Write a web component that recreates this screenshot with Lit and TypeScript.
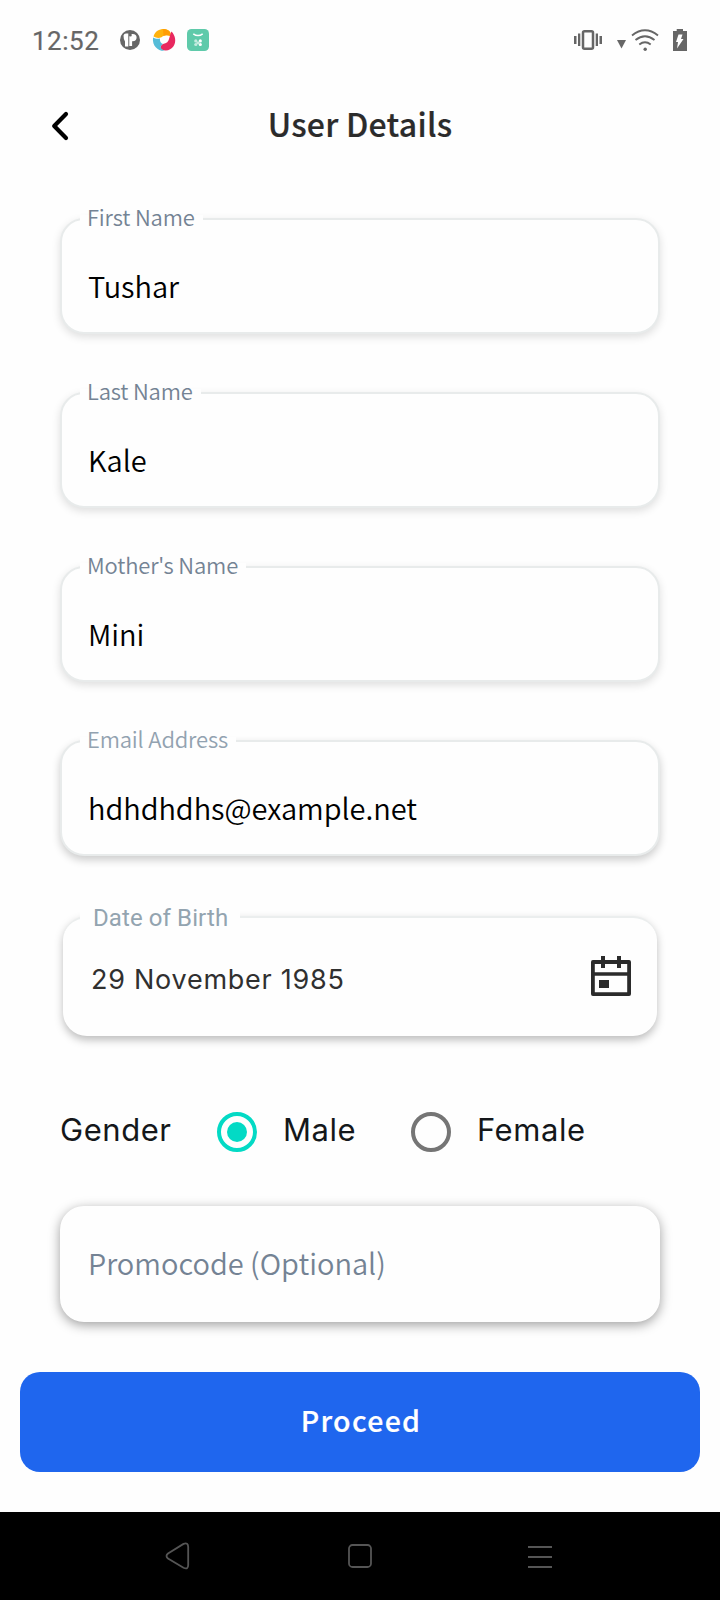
import { LitElement, html, css } from "lit";
import { customElement, property, state } from "lit/decorators.js";
import { classMap } from "lit/directives/class-map.js";

@customElement("status-bar")
class StatusBar extends LitElement {
  static styles = css`
    :host { display: flex; height: 80px; padding: 0 32px 0 32px; box-sizing: border-box;
      justify-content: space-between; align-items: flex-start; }
    .time { font: 400 26px/82px Roboto, sans-serif; color: #666; width: 88px; letter-spacing: 0.5px; -webkit-text-stroke: 0.2px #666; }
    .side { display: flex; align-items: flex-start; }
    svg { display: block; }
  `;
  render() {
    return html`
      <div class="side">
        <div class="time">12:52</div>
        <svg width="90" height="80" viewBox="120 0 90 80">
          <circle cx="130" cy="40" r="10" fill="#666" />
          <path d="M123.500 35.500q.5-2 2.500-2h2.300V46.500h-3.300V41.500q-1.500-2-1.500-6z" fill="#fff" />
          <path d="M129.300 46V34h3.300q4 0 4 3.600t-4 3.600h-.5v4.800z" fill="#fff" />
          <circle cx="130.300" cy="35" r="1.500" fill="#666" />
          <path d="M153.500 36.500 C155 30.500 161 28.300 166 29.200 C169.500 30 171.300 32.500 170.500 36 C168 34.800 164.500 34.800 161.500 37.200 C158.500 38.500 156 37.800 153.500 36.500Z" fill="#ffb20d" />
          <path d="M163 29.100 C169 29.500 171.300 32.500 170.500 36 C168 35 166 34.800 163.500 35.800Z" fill="#ff9c05" />
          <path d="M171.500 31.500 C175.500 35.500 176.500 42 173.500 46.300 C171 50 166.500 51.500 162 49.800 C159.500 48 160.500 45.500 163 44 C166.500 43.500 168.800 41.500 169.300 38 C170.200 35.500 170.300 33.500 171.500 31.500Z" fill="#e8285f" />
          <path d="M153 37.500 C155 38.800 157.500 39 160 38.500 C159.500 41 160.800 43.300 163 44 C159.500 45.500 160 49.300 165 50.800 C158.500 51.500 152 46.500 153 37.500Z" fill="#55bcd8" />
          <rect x="187" y="29" width="22" height="22" rx="4.500" fill="#5fcaaa" />
          <path d="M193.300 33.800q4.700 3.600 9.400 0" fill="none" stroke="#fff" stroke-width="1.500" />
          <g fill="#c4ebdf"><circle cx="195.800" cy="40.900" r="1.600" /><circle cx="200.300" cy="40.900" r="1.600" fill="#fff" /><circle cx="195.800" cy="44.500" r="1.600" /><circle cx="200.300" cy="44.500" r="1.600" fill="#fff" /><rect x="196.500" y="41.500" width="3" height="2.500" /></g>
        </svg>
      </div>
      <svg width="116" height="80" viewBox="572 0 116 80" fill="#666">
        <rect x="583" y="31.200" width="10" height="17.600" rx="1.500" fill="none" stroke="#666" stroke-width="2.500" />
        <path d="M574 36h2.500v8H574zM578 33.500h2.300v12.500H578zM595.700 33.500h2.300v12.500h-2.300zM599.500 36h2.500v8h-2.500z" />
        <path d="M617 40h9l-4.500 8.500z" />
        <g fill="none" stroke="#666" stroke-width="1.900">
          <path d="M632 35.500q13-10.500 26 0" /><path d="M635.500 40q9.500-7.500 19 0" /><path d="M639.300 44.500q5.700-4.500 11.400 0" />
        </g>
        <circle cx="645.200" cy="49.300" r="1.700" />
        <path d="M673 31h3.700v-2h6.300v2h4v20h-14z" />
        <path d="M678.500 34.500h4l-1.500 4.500h2.500l-6.500 9.500 1-6.500h-2z" fill="#fff" />
      </svg>`;
  }
}

@customElement("text-field")
class TextField extends LitElement {
  @property() label = "";
  @property() value = "";
  @property() placeholder = "";
  @property() kind = "soft";

  static styles = css`
    :host { display: block; }
    .box { position: relative; box-sizing: border-box; height: 116px; border-radius: 24px;
      border: 2px solid #e8ebeb; background: #fefefe; padding: 0 26px;
      font-family: "Noto Sans CJK JP", sans-serif; font-weight: 350; font-kerning: normal; }
    .soft { box-shadow: 0 3px 8px rgba(0,0,0,.13); }
    .mid { box-shadow: 0 4px 9px rgba(0,0,0,.2); }
    .strong { border-color: #fefefe; box-shadow: 0 3px 12px rgba(0,0,0,.38); }
    .label { position: absolute; left: 18px; top: -20px; padding: 0 8px 0 7px; height: 32px;
      background: linear-gradient(#fefefe, #fefefe) 0 15px / 100% 10px no-repeat;
      color: #748394; font-size: 22px; line-height: 32px; white-space: nowrap; letter-spacing: -.17px; }
    .mid .label { color: #92a2b0; }
    .value { font-size: 29px; line-height: 40px; padding-top: 45px; color: #000; white-space: nowrap; letter-spacing: -.04px; }
    .hint { font-size: 29px; line-height: 40px; padding-top: 34px; color: #748394; white-space: nowrap; }
  `;
  render() {
    return html`<div class="box ${this.kind}">
      ${this.label ? html`<span class="label">${this.label}</span>` : ""}
      ${this.value
        ? html`<div class="value">${this.value}</div>`
        : html`<div class="hint">${this.placeholder}</div>`}
    </div>`;
  }
}

@customElement("date-field")
class DateField extends LitElement {
  static styles = css`
    :host { display: block; }
    .box { position: relative; box-sizing: border-box; height: 120px; border-radius: 24px;
      border-top: 2px solid #ebeeee; background: #fefefe; padding: 0 26px 0 28px;
      display: flex; justify-content: space-between; align-items: flex-start;
      box-shadow: 0 4px 9px rgba(0,0,0,.26); }
    .label { position: absolute; left: 17px; top: -17px; width: 147px; height: 34px; padding-left: 13px;
      background: linear-gradient(#fefefe, #fefefe) 0 8px / 100% 14px no-repeat;
      color: #93a4b0; font: 400 24px/34px Roboto, sans-serif; white-space: nowrap; letter-spacing: .1px; }
    .value { font: 400 27px/40px Inter, sans-serif; padding-top: 42px; color: #303030; white-space: nowrap; letter-spacing: .74px; }
    svg { display: block; margin-top: 38px; }
  `;
  render() {
    return html`<div class="box">
      <span class="label">Date of Birth</span>
      <div class="value">29 November 1985</div>
      <svg width="40" height="40" viewBox="0 0 40 40" fill="none" stroke="#2b2b2b">
        <path d="M1.900 6h36.200v32.100H1.900z" stroke-width="3.800" stroke-linejoin="round" />
        <path d="M2 18h36" stroke-width="3.400" />
        <path d="M12 0v12M28 0v12" stroke-width="4" />
        <rect x="8" y="24" width="10" height="8" fill="#2b2b2b" stroke="none" />
      </svg>
    </div>`;
  }
}

@customElement("app-root")
class AppRoot extends LitElement {
  @state() gender = "Male";

  static styles = css`
    :host { display: flex; flex-direction: column; width: 720px; height: 1600px; background: #fefefe; overflow: hidden; }
    svg { display: block; }
    .head { height: 90px; display: grid; grid-template-columns: 80px 1fr 80px; align-items: center; }
    .back { justify-self: end; margin-top: 2px; }
    .title { margin: 0 0 4px; text-align: center; font: 500 32px/48px "Noto Sans CJK JP", sans-serif; letter-spacing: .25px; color: #2b2b2b; -webkit-text-stroke: .2px #2b2b2b; }
    .form { display: flex; flex-direction: column; gap: 58px; padding: 48px 60px 0; }
    .date { margin: 2px 3px 0; }
    .genders { display: flex; align-items: center; height: 60px; margin: 64px 60px 0;
      font: 400 31px/60px Inter, sans-serif; letter-spacing: .55px; color: #14171a; }
    .gl { width: 157px; }
    .radio { box-sizing: border-box; width: 40px; height: 40px; border: 4px solid #757575; border-radius: 50%;
      display: grid; place-items: center; margin-top: 3px; }
    .radio.on { border-color: #03dac5; }
    .radio.on::after { content: ""; width: 20px; height: 20px; border-radius: 50%; background: #03dac5; }
    .opt { display: flex; align-items: center; gap: 26px; width: 194px; }
    .promo { margin: 46px 60px 0; }
    .go { margin: 50px 20px 0; height: 100px; border: 0; border-radius: 20px; background: #1f66ee; color: #fff; padding: 0 0 4px 2px;
      font: 500 28.5px/40px "Noto Sans CJK JP", sans-serif; letter-spacing: 1.3px; -webkit-text-stroke: .2px #fff; }
    .nav { margin-top: auto; height: 88px; background: #000; display: flex; }
  `;

  option(name: string) {
    return html`<div class="opt" @click=${() => (this.gender = name)}>
      <span class=${classMap({ radio: true, on: this.gender === name })}></span><span>${name}</span>
    </div>`;
  }

  render() {
    return html`
      <status-bar></status-bar>
      <div class="head">
        <svg class="back" width="32" height="36" viewBox="48 108 32 36" fill="none" stroke="#000" stroke-width="4.200" stroke-linecap="round" stroke-linejoin="round">
          <path d="M66 114 54.200 126 66 138" />
        </svg>
        <h1 class="title">User Details</h1>
      </div>
      <div class="form">
        <text-field label="First Name" value="Tushar"></text-field>
        <text-field label="Last Name" value="Kale"></text-field>
        <text-field label="Mother's Name" value="Mini"></text-field>
        <text-field label="Email Address" value="hdhdhdhs@example.net" kind="mid"></text-field>
        <date-field class="date"></date-field>
      </div>
      <div class="genders"><span class="gl">Gender</span>${this.option("Male")}${this.option("Female")}</div>
      <text-field class="promo" placeholder="Promocode (Optional)" kind="strong"></text-field>
      <button class="go">Proceed</button>
      <div class="nav">
        <svg width="720" height="88" viewBox="0 1512 720 88" fill="none" stroke="#555" stroke-width="1.800">
          <path d="M168 1553.500 183.500 1543.900Q188.200 1542 188.200 1547V1565Q188.200 1570 183.500 1567.700L168 1558.500Q165 1556 168 1553.500Z" />
          <rect x="349" y="1545" width="22" height="22" rx="3.500" />
          <path d="M528 1547h24M528 1557h24M528 1567h24" />
        </svg>
      </div>`;
  }
}
